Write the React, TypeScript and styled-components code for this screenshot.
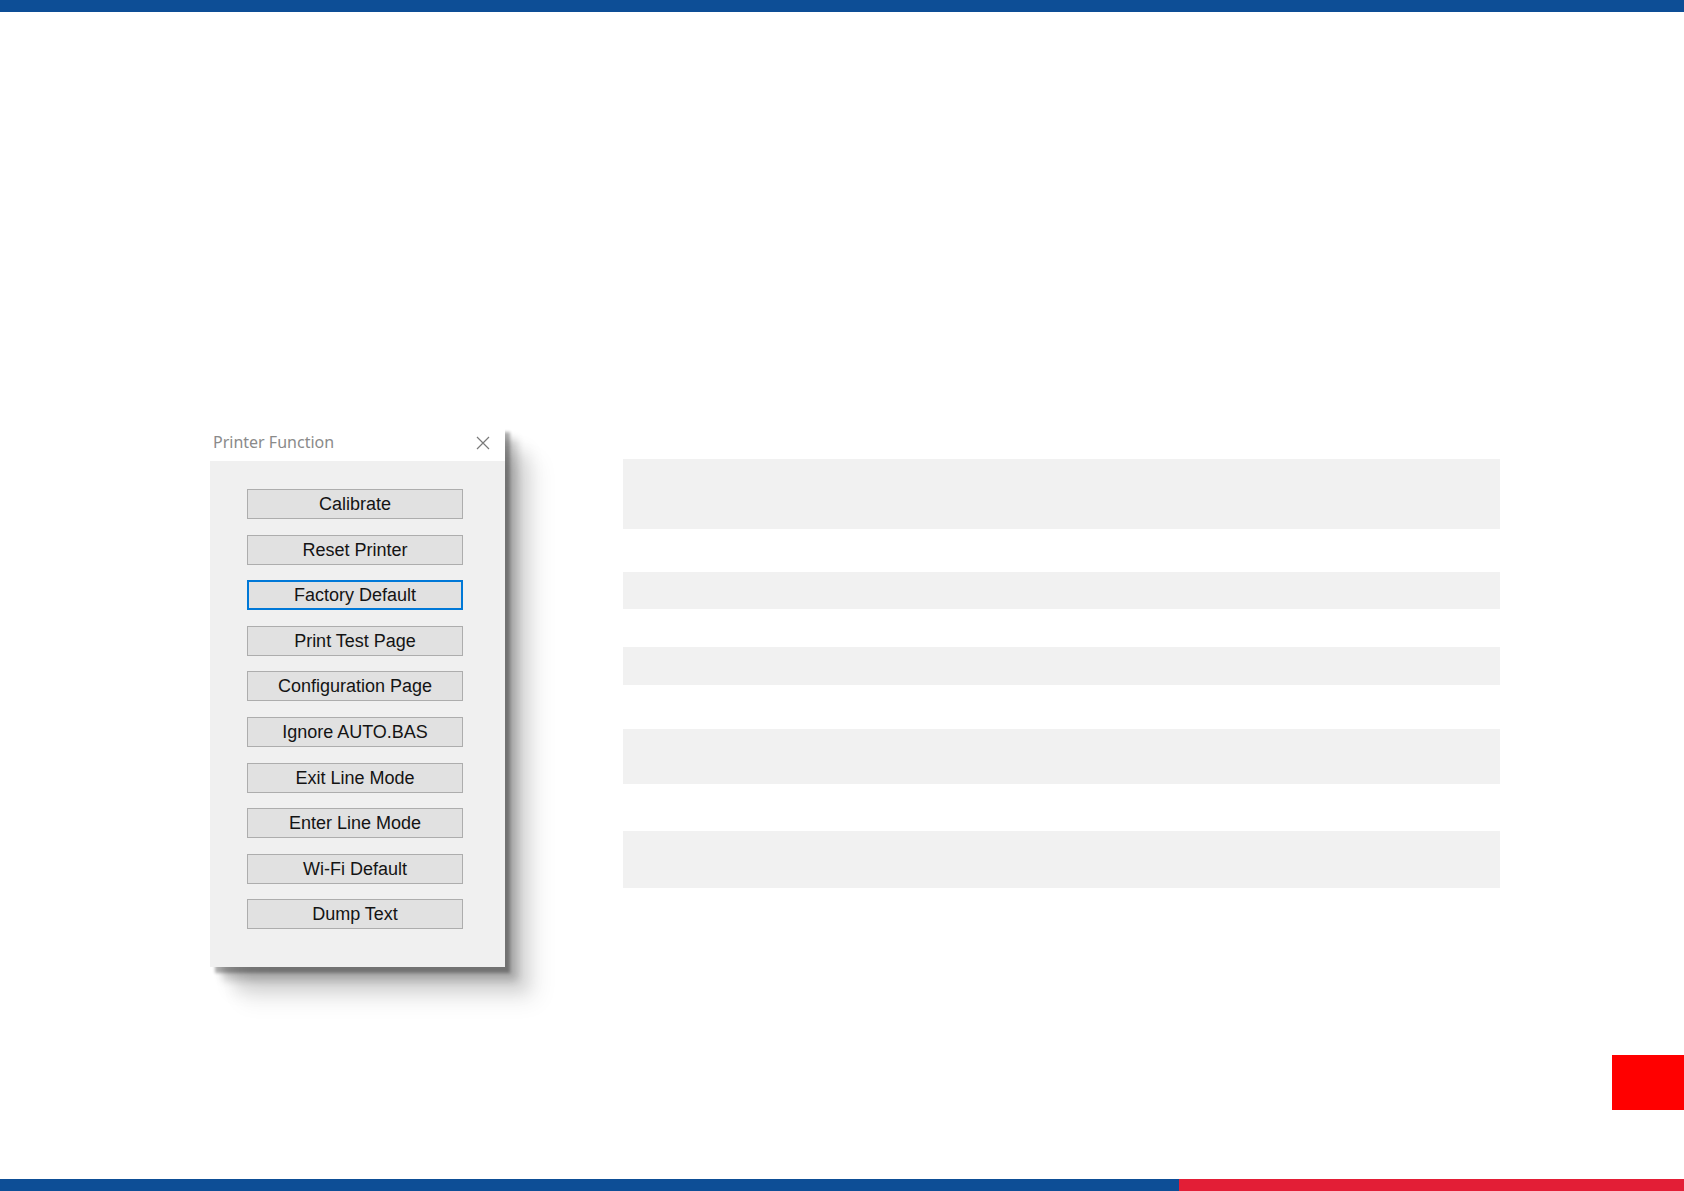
import React from "react";
import styled, { createGlobalStyle } from "styled-components";

const GlobalStyle = createGlobalStyle`
  html, body {
    margin: 0;
    padding: 0;
    background: #ffffff;
  }
  body {
    font-family: "Liberation Sans", Arial, sans-serif;
  }
`;

const Page = styled.div`
  width: 1684px;
  height: 1191px;
  display: flex;
  flex-direction: column;
  overflow: hidden;
  background: #ffffff;
`;

const TopBar = styled.div`
  height: 12px;
  flex-shrink: 0;
  background: #0d4e96;
`;

const Content = styled.div`
  flex: 1;
  display: flex;
  align-items: flex-start;
  padding: 414px 0 0 210px;
`;

const Dialog = styled.div`
  width: 295px;
  height: 541px;
  flex-shrink: 0;
  display: flex;
  flex-direction: column;
  background: #f0f0f0;
  box-shadow: 5px 6px 3px rgba(0, 0, 0, 0.3), 12px 13px 8px rgba(0, 0, 0, 0.2),
    22px 24px 16px rgba(0, 0, 0, 0.13), 32px 34px 22px rgba(0, 0, 0, 0.07);
`;

const TitleBar = styled.div`
  height: 35px;
  background: #ffffff;
  display: flex;
  align-items: center;
  justify-content: space-between;
  padding: 0 15px 0 3px;
`;

const Title = styled.span`
  font-family: "Noto Sans", "Open Sans", sans-serif;
  font-size: 16px;
  color: #8a8a8a;
  margin-top: -3px;
`;

const CloseIcon = styled.svg`
  width: 14px;
  height: 14px;
  margin-top: -2px;
`;

const DialogBody = styled.div`
  flex: 1;
  display: flex;
  flex-direction: column;
  gap: 15.6px;
  padding: 28px 0 0 37px;
`;

const FuncButton = styled.button<{ $focused?: boolean }>`
  width: 216px;
  height: 30px;
  box-sizing: border-box;
  margin: 0;
  padding: 0;
  background: #e1e1e1;
  border: ${(p) => (p.$focused ? "2px solid #0078d7" : "1px solid #adadad")};
  font-family: "Liberation Sans", Arial, sans-serif;
  font-size: 18px;
  color: #141414;
  line-height: 1;
  display: flex;
  align-items: center;
  justify-content: center;
`;

const BarColumn = styled.div`
  margin: 33px 0 0 118px;
  width: 877px;
  display: flex;
  flex-direction: column;
`;

const Bar = styled.div<{ $height: number; $gap: number }>`
  height: ${(p) => p.$height}px;
  margin-top: ${(p) => p.$gap}px;
  background: #f1f1f1;
`;

const Footer = styled.div`
  display: flex;
  justify-content: flex-end;
  padding-bottom: 69px;
`;

const RedTab = styled.div`
  width: 72px;
  height: 55px;
  background: #ff0000;
`;

const BottomBar = styled.div`
  height: 12px;
  flex-shrink: 0;
  display: flex;
`;

const BottomSegment = styled.div<{ $color: string; $width?: number }>`
  background: ${(p) => p.$color};
  ${(p) => (p.$width ? `width: ${p.$width}px;` : "flex: 1;")}
`;

const buttons = [
  "Calibrate",
  "Reset Printer",
  "Factory Default",
  "Print Test Page",
  "Configuration Page",
  "Ignore AUTO.BAS",
  "Exit Line Mode",
  "Enter Line Mode",
  "Wi-Fi Default",
  "Dump Text",
];

const bars = [
  { height: 70, gap: 0 },
  { height: 37, gap: 43 },
  { height: 38, gap: 38 },
  { height: 55, gap: 44 },
  { height: 57, gap: 47 },
];

export default function App() {
  return (
    <>
      <GlobalStyle />
      <Page>
        <TopBar />
        <Content>
          <Dialog>
            <TitleBar>
              <Title>Printer Function</Title>
              <CloseIcon viewBox="0 0 14 14">
                <path d="M1 1 L13 13 M13 1 L1 13" stroke="#7a7a7a" strokeWidth="1.2" fill="none" />
              </CloseIcon>
            </TitleBar>
            <DialogBody>
              {buttons.map((label) => (
                <FuncButton key={label} $focused={label === "Factory Default"}>
                  {label}
                </FuncButton>
              ))}
            </DialogBody>
          </Dialog>
          <BarColumn>
            {bars.map((b, i) => (
              <Bar key={i} $height={b.height} $gap={b.gap} />
            ))}
          </BarColumn>
        </Content>
        <Footer>
          <RedTab />
        </Footer>
        <BottomBar>
          <BottomSegment $color="#0d4e96" $width={1179} />
          <BottomSegment $color="#e31e36" />
        </BottomBar>
      </Page>
    </>
  );
}
